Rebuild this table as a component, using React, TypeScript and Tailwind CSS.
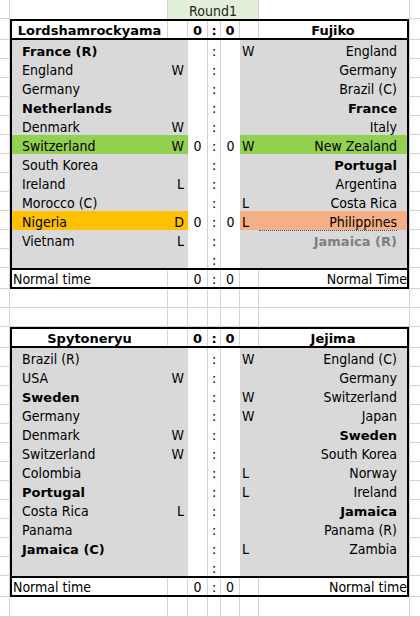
import React from 'react';

interface Side {
  name: string;
  mark?: string;
  bold?: boolean;
  muted?: boolean;
  fill?: string;
  dottedTop?: boolean;
}

interface Row {
  left: Side;
  right: Side;
  score?: boolean;
}

interface Match {
  home: string;
  away: string;
  homeFoot: string;
  awayFoot: string;
  rows: Row[];
}

const GRAY = 'bg-[#d9d9d9]';
const GREEN = 'bg-[#92d050]';
const ORANGE = 'bg-[#ffc000]';
const SALMON = 'bg-[#f4b084]';

const reg = "font-['DejaVu_Sans_Condensed','DejaVu_Sans',sans-serif] text-[14px] leading-[16px]";
const bld = "font-['DejaVu_Sans',sans-serif] font-bold text-[13px] leading-[14px]";

const matches: Match[] = [
  {
    home: 'Lordshamrockyama',
    away: 'Fujiko',
    homeFoot: 'Normal time',
    awayFoot: 'Normal Time',
    rows: [
      { left: { name: 'France (R)', bold: true }, right: { name: 'England', mark: 'W' } },
      { left: { name: 'England', mark: 'W' }, right: { name: 'Germany' } },
      { left: { name: 'Germany' }, right: { name: 'Brazil (C)' } },
      { left: { name: 'Netherlands', bold: true }, right: { name: 'France', bold: true } },
      { left: { name: 'Denmark', mark: 'W' }, right: { name: 'Italy' } },
      { left: { name: 'Switzerland', mark: 'W', fill: GREEN }, right: { name: 'New Zealand', mark: 'W', fill: GREEN }, score: true },
      { left: { name: 'South Korea' }, right: { name: 'Portugal', bold: true } },
      { left: { name: 'Ireland', mark: 'L' }, right: { name: 'Argentina' } },
      { left: { name: 'Morocco (C)' }, right: { name: 'Costa Rica', mark: 'L' } },
      { left: { name: 'Nigeria', mark: 'D', fill: ORANGE }, right: { name: 'Philippines', mark: 'L', fill: SALMON }, score: true },
      { left: { name: 'Vietnam', mark: 'L' }, right: { name: 'Jamaica (R)', bold: true, muted: true, dottedTop: true } },
      { left: { name: '' }, right: { name: '' } },
    ],
  },
  {
    home: 'Spytoneryu',
    away: 'Jejima',
    homeFoot: 'Normal time',
    awayFoot: 'Normal time',
    rows: [
      { left: { name: 'Brazil (R)' }, right: { name: 'England (C)', mark: 'W' } },
      { left: { name: 'USA', mark: 'W' }, right: { name: 'Germany' } },
      { left: { name: 'Sweden', bold: true }, right: { name: 'Switzerland', mark: 'W' } },
      { left: { name: 'Germany' }, right: { name: 'Japan', mark: 'W' } },
      { left: { name: 'Denmark', mark: 'W' }, right: { name: 'Sweden', bold: true } },
      { left: { name: 'Switzerland', mark: 'W' }, right: { name: 'South Korea' } },
      { left: { name: 'Colombia' }, right: { name: 'Norway', mark: 'L' } },
      { left: { name: 'Portugal', bold: true }, right: { name: 'Ireland', mark: 'L' } },
      { left: { name: 'Costa Rica', mark: 'L' }, right: { name: 'Jamaica', bold: true } },
      { left: { name: 'Panama' }, right: { name: 'Panama (R)' } },
      { left: { name: 'Jamaica (C)', bold: true }, right: { name: 'Zambia', mark: 'L' } },
      { left: { name: '' }, right: { name: '' } },
    ],
  },
];

// gutter row heights, top to bottom (sum = 617)
const gutter = [19, 21, ...Array(12).fill(19), 21, 19, 19, 21, ...Array(12).fill(19), 21, 20];

function Gutter({ side }: { side: 'l' | 'r' }) {
  return (
    <div className={`flex flex-col shrink-0 ${side === 'l' ? 'w-[10px] border-r' : 'w-[11px] border-l'} border-[#d4d4d4]`}>
      {gutter.map((h, i) => (
        <div key={i} className="border-b border-[#d4d4d4] shrink-0" style={{ height: h }} />
      ))}
    </div>
  );
}

function EmptyRow({ h = 'h-[19px]' }: { h?: string }) {
  return (
    <div className={`flex ${h} border-b border-[#d4d4d4]`}>
      <div className="w-[158px] border-r border-[#d4d4d4]" />
      <div className="w-[20px] border-r border-[#d4d4d4]" />
      <div className="w-[20px] border-r border-[#d4d4d4]" />
      <div className="w-[13px] border-r border-[#d4d4d4]" />
      <div className="w-[19px] border-r border-[#d4d4d4]" />
      <div className="w-[19px] border-r border-[#d4d4d4]" />
      <div className="w-[150px]" />
    </div>
  );
}

function ListRow({ row }: { row: Row }) {
  const { left, right } = row;
  return (
    <div className="flex h-[19px]">
      <div className={`flex w-[176px] ${left.fill ?? GRAY}`}>
        <div className={`w-[156px] flex items-end pl-[10px] whitespace-nowrap ${left.bold ? bld : reg}`}>{left.name}</div>
        <div className={`w-[20px] flex items-end justify-end pr-[4px] ${reg}`}>{left.mark}</div>
      </div>
      <div className={`w-[20px] flex items-end justify-center border-r border-[#d4d4d4] ${reg}`}>{row.score ? '0' : ''}</div>
      <div className={`w-[13px] flex items-end justify-center border-r border-[#d4d4d4] ${reg}`}>:</div>
      <div className={`w-[19px] flex items-end justify-center ${reg}`}>{row.score ? '0' : ''}</div>
      <div className={`flex w-[167px] ${right.fill ?? GRAY}`}>
        <div className={`w-[19px] flex items-end pl-[2px] ${reg}`}>{right.mark}</div>
        <div className="w-[148px] flex pr-[10px]">
          <div
            className={`flex-1 flex items-end justify-end whitespace-nowrap ${right.dottedTop ? 'border-t border-dotted border-[#3e5470]' : ''} ${
              right.bold ? bld : reg
            } ${right.muted ? 'text-[#7f7f7f]' : 'text-black'}`}
          >
            {right.name}
          </div>
        </div>
      </div>
    </div>
  );
}

function EdgeRow({ a, g, gAlign, bold, top }: { a: string; g: string; gAlign: string; bold: boolean; top: boolean }) {
  const t = bold ? bld : reg;
  return (
    <div className={`flex h-[19px] bg-white ${top ? 'border-b-2' : 'border-t-2'} border-black`}>
      <div className={`w-[156px] flex items-end border-r border-[#d4d4d4] whitespace-nowrap ${top ? 'justify-center' : 'pl-[1px]'} ${t}`}>{a}</div>
      <div className="w-[20px] border-r border-[#d4d4d4]" />
      <div className={`w-[20px] flex items-end justify-center border-r border-[#d4d4d4] ${t}`}>0</div>
      <div className={`w-[13px] flex items-end justify-center border-r border-[#d4d4d4] ${t}`}>:</div>
      <div className={`w-[19px] flex items-end justify-center border-r border-[#d4d4d4] ${t}`}>0</div>
      <div className="w-[19px] border-r border-[#d4d4d4]" />
      <div className={`w-[148px] flex items-end whitespace-nowrap ${gAlign} ${t}`}>{g}</div>
    </div>
  );
}

function MatchTable({ m }: { m: Match }) {
  return (
    <div className="border-2 border-black flex flex-col text-black">
      <EdgeRow a={m.home} g={m.away} gAlign="justify-center" bold top />
      {m.rows.map((r, i) => (
        <ListRow key={i} row={r} />
      ))}
      <EdgeRow a={m.homeFoot} g={m.awayFoot} gAlign="justify-end" bold={false} top={false} />
    </div>
  );
}

export default function App() {
  return (
    <div className="w-[420px] h-[617px] overflow-hidden bg-white flex text-black">
      <Gutter side="l" />
      <div className="w-[399px] flex flex-col shrink-0">
        {/* Round title row */}
        <div className="flex h-[19px]">
          <div className="w-[158px] border-r border-[#d4d4d4]" />
          <div className={`w-[91px] bg-[#e2efda] border-r border-[#d4d4d4] flex items-end justify-center text-[#222] ${reg}`}>Round1</div>
          <div className="w-[150px]" />
        </div>
        <MatchTable m={matches[0]} />
        <EmptyRow />
        <EmptyRow />
        <MatchTable m={matches[1]} />
        <EmptyRow h="h-[20px]" />
      </div>
      <Gutter side="r" />
    </div>
  );
}
